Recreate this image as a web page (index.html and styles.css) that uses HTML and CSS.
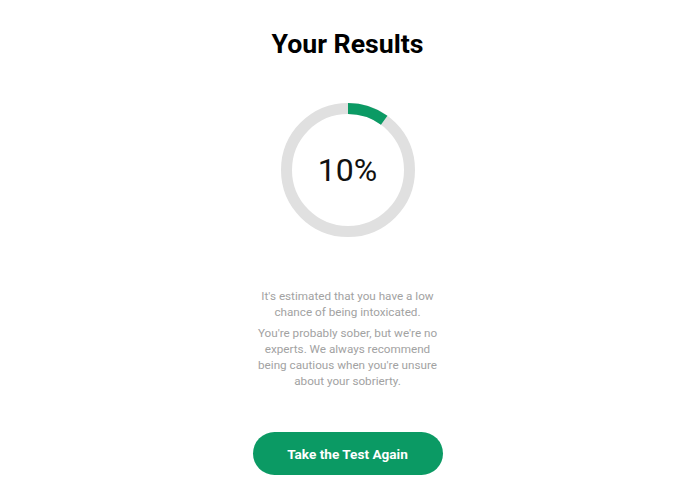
FILE: index.html
```html
<!DOCTYPE html>
<html lang="en">
<head>
  <meta charset="UTF-8">
  <title>Your Results</title>
  <link rel="stylesheet" href="styles.css">
</head>
<body>
  <div class="container">
    <h1>Your Results</h1>
    <div class="gauge">
      <svg width="140" height="140" viewBox="0 0 140 140">
        <circle cx="70" cy="70" r="61.5" fill="none" stroke="#e0e0e0" stroke-width="11"></circle>
        <circle cx="70" cy="70" r="61.5" fill="none" stroke="#0b9a64" stroke-width="11"
          stroke-dasharray="38.64 386.4" transform="rotate(-90 70 70)"></circle>
      </svg>
      <div class="percent">10%</div>
    </div>
    <div class="result-text">
      <p>It's estimated that you have a low chance of being intoxicated.</p>
      <p>You're probably sober, but we're no experts. We always recommend being cautious when you're unsure about your sobrierty.</p>
    </div>
    <button class="again-button">Take the Test Again</button>
  </div>
</body>
</html>
```

FILE: styles.css
```css
body {
  font-family: Roboto, "Liberation Sans", sans-serif;
  background-color: #fff;
  margin: 0;
  padding: 0;
}

.container {
  display: flex;
  flex-direction: column;
  align-items: center;
  padding-top: 27px;
}

h1 {
  margin: 0;
  font-size: 26.7px;
  line-height: 34px;
  font-weight: 700;
  color: #000;
}

.gauge {
  position: relative;
  width: 140px;
  height: 140px;
  margin-top: 39px;
}

.gauge svg {
  display: block;
}

.percent {
  position: absolute;
  inset: 0;
  display: flex;
  justify-content: center;
  align-items: center;
  font-size: 32px;
  color: #111;
}

.result-text {
  width: 190px;
  margin-top: 48px;
  text-align: center;
  color: #a2a2a2;
  font-size: 11.7px;
  line-height: 16px;
}

.result-text p {
  margin: 0 0 5px;
}

.again-button {
  margin-top: 38px;
  width: 190px;
  height: 43px;
  border: none;
  border-radius: 22px;
  background-color: #0b9a64;
  color: #fff;
  font-family: Roboto, "Liberation Sans", sans-serif;
  font-size: 13.6px;
  font-weight: 700;
  cursor: pointer;
}
```
